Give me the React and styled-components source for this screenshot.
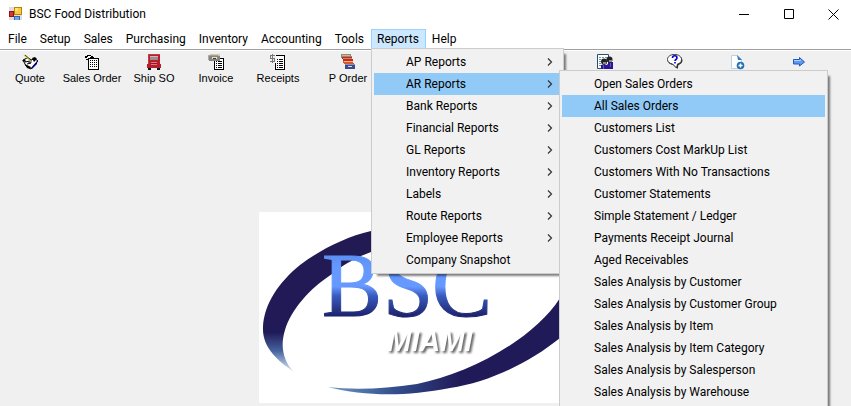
import React from 'react'
import styled, {createGlobalStyle} from 'styled-components'

const GlobalStyle=createGlobalStyle`
    html,body,#root{
        height:100%;
        margin:0;
    }
    *{
        box-sizing:border-box;
    }
    button{
        border:0;
        margin:0;
        padding:0;
        background:none;
        color:#000;
        font:inherit;
        text-align:left;
        white-space:nowrap;
    }
    svg{
        display:block;
    }
`
const Root=styled.div`
    display:flex;
    flex-direction:column;
    min-height:100%;
    height:100vh;
    overflow:hidden;
    background:#f0f0f0;
    color:#000;
    font-family:Roboto,"Open Sans",sans-serif;
    font-size:12px;
    line-height:16px;
`
const TitleBar=styled.header`
    display:flex;
    align-items:center;
    gap:6px;
    height:28px;
    flex:none;
    padding-left:8px;
    background:#fff;
`
const Title=styled.h1`
    flex-grow:1;
    margin:0;
    font-size:12px;
    font-weight:normal;
`
const WindowButtons=styled.div`
    display:flex;
    gap:10px;
`
const WindowButton=styled.button`
    display:flex;
    align-items:center;
    justify-content:center;
    width:35px;
    height:26px;
`
const MenuBar=styled.nav`
    display:flex;
    height:21px;
    flex:none;
    padding:1px 0 0 2px;
    background:#fff;
`
const MenuSlot=styled.div`
    position:relative;
`
const MenuButton=styled.button`
    height:20px;
    padding:0 6px 0 5px;
    border:1px solid ${props=>props.$open?'#99d1ff':'transparent'};
    background:${props=>props.$open?'#cce8ff':'transparent'};
`
const Menu=styled.ul`
    position:absolute;
    z-index:1;
    top:${props=>props.$sub?'-3px':'19px'};
    left:${props=>props.$sub?'185px':'0'};
    width:${props=>props.$sub?'269px':'193px'};
    min-height:${props=>props.$sub?'100vh':'0'};
    margin:0;
    padding:2px;
    border:1px solid #ccc;
    background:#f1f1f1;
    box-shadow:4px 4px 2px -2px rgba(0,0,0,0.5);
    list-style:none;
`
const MenuRow=styled.li`
    position:relative;
`
const MenuItem=styled.button`
    display:flex;
    align-items:center;
    justify-content:space-between;
    width:100%;
    height:22px;
    padding:0 8px 0 32px;
    background:${props=>props.$active?'#91c9f7':'transparent'};
`
const ToolBar=styled.div`
    display:flex;
    flex:none;
    height:38px;
    padding-top:4px;
    border-top:1px solid #a0a0a0;
    box-shadow:inset 0 1px #fff;
`
const ToolGroup=styled.div`
    display:flex;
    margin-left:${props=>props.$gap}px;
`
const ToolButton=styled.button`
    display:flex;
    flex-direction:column;
    align-items:center;
    width:62px;
    font-family:"Liberation Sans",Arial,sans-serif;
    font-size:11px;
    line-height:16px;
`
const Workspace=styled.main`
    display:flex;
    flex-grow:1;
    align-items:flex-end;
    justify-content:center;
    padding-bottom:3px;
`
const LogoPanel=styled.div`
    width:333px;
    height:191px;
    background:#fff;
`

const AppIcon=()=>(
    <svg width="15" height="14" viewBox="0 0 15 14" shapeRendering="crispEdges">
        <path d="M1 0h13v13H1z" fill="#ddd"/>
        <path d="M1 4h5v6H1z" fill="#8c1616"/>
        <path d="M2 5h3v4H2z" fill="#d33"/>
        <path d="M6 0h8v8H6z" fill="#b98600"/>
        <path d="M7 1h6v6H7z" fill="#ffc83c"/>
        <path d="M7 1h3v3H7z" fill="#ffe08a"/>
        <path d="M6 9h6v4H6z" fill="#3567b8"/>
        <path d="M7 10h4v3H7z" fill="#70a5f1"/>
    </svg>
)
const QuoteIcon=()=>(
    <svg width="16" height="16" viewBox="0 0 16 16">
        <path d="M1 6l4-2 5 2 2-2 4 3-7 8-5-3z" fill="#fff" stroke="#000"/>
        <path d="M0 7l3-2 1 3zM10 4l3-1 2 2-3 3zM3 10l2 4 3 1 1-2z" fill="#000"/>
        <path d="M9 14l6-7v3l-5 5z" fill="#000080"/>
        <path d="M3 8l5-1M5 10l4-1" stroke="#000" fill="none"/>
        <path d="M2 1l6 5" stroke="#d8d235" strokeWidth="1.500"/>
        <path d="M3 1l6 5v3l-3-1" fill="none" stroke="#000" strokeWidth=".7"/>
    </svg>
)
const SalesOrderIcon=()=>(
    <svg width="16" height="16" viewBox="0 0 16 16" shapeRendering="crispEdges">
        <path d="M4.500 4.500h10v11h-10z" fill="#fff" stroke="#000"/>
        <path d="M1 2h2V1h4v1h2v1h1v2H8V4H6V3H3v1H1z" fill="#000"/>
        <path d="M4 2h3v1H4z" fill="#fff"/>
        <path d="M6 6.500h7M6 8.500h7M6 10.500h7M6 12.500h7" stroke="#000" strokeDasharray="1 1"/>
        <path d="M2 5h2v1H2z" fill="#000"/>
    </svg>
)
const TruckIcon=()=>(
    <svg width="16" height="16" viewBox="0 0 16 16" shapeRendering="crispEdges">
        <path d="M2 0h12v10h1v4H1v-4h1z" fill="#b3202c"/>
        <path d="M2 0h12v1H2zM2 0h1v10H2z" fill="#c93b47"/>
        <path d="M4 2h8v4H4z" fill="#9c8c90"/>
        <path d="M4 2h8v1H4z" fill="#d2b6b6"/>
        <path d="M5 8h6v3H5z" fill="#db7780"/>
        <path d="M5 9h6v1H5z" fill="#8d1822"/>
        <path d="M2 14h3v2H2zM11 14h3v2h-3z" fill="#111"/>
    </svg>
)
const InvoiceIcon=()=>(
    <svg width="16" height="16" viewBox="0 0 16 16" shapeRendering="crispEdges">
        <path d="M6.500 4.500h9v11h-9z" fill="#fff" stroke="#000"/>
        <path d="M8 7.500h1M10 7.500h4M8 9.500h1M10 9.500h4M8 11.500h1M10 11.500h4M8 13.500h1M10 13.500h4" stroke="#000"/>
        <path d="M2 0h10v2H2z" fill="#c8c8c8"/>
        <path d="M0 1h2v5H0z" fill="#aaa"/>
        <path d="M1 2h11v5H1z" fill="#858585"/>
        <path d="M2 1h8v1H2z" fill="#b9a257"/>
        <path d="M4 3h5v2H4z" fill="#e9e3c4"/>
        <path d="M5 4h3v1H5z" fill="#333"/>
    </svg>
)
const ReceiptsIcon=()=>(
    <svg width="16" height="16" viewBox="0 0 16 16" shapeRendering="crispEdges">
        <path d="M5.500 1.500h9v14h-9z" fill="#fff" stroke="#000"/>
        <path d="M7 5.500h1M9 5.500h4M7 7.500h1M9 7.500h4M7 9.500h1M9 9.500h4M7 11.500h1M9 11.500h4M7 13.500h1M9 13.500h4" stroke="#000"/>
        <path d="M0 0h6v9H0z" fill="#f0f0f0"/>
        <path d="M5 1.500H.500v3h4v3H0M2.500 0v9" fill="none" stroke="#777"/>
    </svg>
)
const PurchaseIcon=()=>(
    <svg width="16" height="16" viewBox="0 0 16 16" shapeRendering="crispEdges">
        <path d="M1 0h10l1 4H1z" fill="#8b8b80"/>
        <path d="M2 1h8v1H2z" fill="#cdbd7c"/>
        <path d="M2 3h10l1 4H3z" fill="#bf2d21"/>
        <path d="M3 4h9v1H3z" fill="#f2745c"/>
        <path d="M3 7h10l1 3H4z" fill="#d35a2d"/>
        <path d="M4 7h9v1H4z" fill="#ffb183"/>
        <path d="M5 10h10v5H5z" fill="#3d4a86"/>
        <path d="M5 10h10v1H5z" fill="#8793c6"/>
        <path d="M8 12h4v1H8z" fill="#d8def6"/>
    </svg>
)
const CustomersIcon=()=>(
    <svg width="16" height="16" viewBox="0 0 16 16">
        <path d="M.5.5h11v14H.500z" fill="#fff" stroke="#24506e"/>
        <path d="M2 3.500h9M2 5.500h9M2 7.500h9M2 9.500h9M2 11.500h9" stroke="#6d91a8" strokeDasharray="2 1"/>
        <path d="M4 11l3-1 3 1 2-3h4v7H4z" fill="#2a1690"/>
        <circle cx="7" cy="7.500" r="3" fill="#222"/>
        <circle cx="12.500" cy="5.500" r="3" fill="#222"/>
        <path d="M6 8h3v2H6zM12 6h3v2h-3z" fill="#8a8a8a"/>
        <path d="M6 11h1v4H6zM13 9h1v4h-1z" fill="#6554bd"/>
    </svg>
)
const HelpIcon=()=>(
    <svg width="16" height="16" viewBox="0 0 16 16">
        <path d="M8 1.500c4 0 7.500 2 7.500 5 0 2-2 4-4 4.500l-1 4-4-4C3 10.500 1 9 1 6.500c0-3 3-5 7-5z" fill="#222"/>
        <path d="M7.500.5c4 0 7 2 7 5s-2 4-4 4.500l-1 4-4-4C2.500 9.500.5 8 .5 5.500c0-3 3-5 7-5z" fill="#fff" stroke="#333"/>
        <path d="M5.500 4c0-3 4.500-3 4.500 0 0 1.500-2 1.500-2 3M8 8v1.500" fill="none" stroke="#0000d0" strokeWidth="1.600"/>
    </svg>
)
const NewPageIcon=()=>(
    <svg width="16" height="16" viewBox="0 0 16 16">
        <path d="M2.500 1.500h6l4 4v9h-10z" fill="#fff" stroke="#b9d2e8"/>
        <path d="M8 1l5 5H9z" fill="#3c78b4"/>
        <circle cx="11.500" cy="11.500" r="3.800" fill="#2370b4"/>
        <path d="M11.500 9.500v4M9.500 11.500h4" stroke="#fff" strokeWidth="1.400"/>
    </svg>
)
const ArrowIcon=()=>(
    <svg width="16" height="16" viewBox="0 0 16 16">
        <path d="M2.500 5.500h6v-2L13.500 8l-5 4v-2h-6z" fill="#5d9bf2" stroke="#2457b5"/>
        <path d="M3 6.500h6.500v-1" stroke="#b2d2ff" fill="none"/>
    </svg>
)
const Chevron=()=>(
    <svg width="6" height="10" viewBox="0 0 6 10">
        <path d="M1 1.500L4.500 5 1 8.500" fill="none" stroke="#333" strokeWidth="1.200"/>
    </svg>
)
const Logo=()=>(
    <svg width="100%" height="100%" viewBox="0 0 333 191" role="img" aria-label="BSC Miami">
        <defs>
            <linearGradient id="left" x1="0" y1="19" x2="0" y2="160" gradientUnits="userSpaceOnUse">
                <stop offset="0" stopColor="#211a52"/>
                <stop offset=".72" stopColor="#211a58"/>
                <stop offset=".85" stopColor="#46639f"/>
                <stop offset="1" stopColor="#dcecf7"/>
            </linearGradient>
            <linearGradient id="right" x1="68" y1="0" x2="200" y2="0" gradientUnits="userSpaceOnUse">
                <stop offset="0" stopColor="#6f9cc4"/>
                <stop offset=".5" stopColor="#35508f"/>
                <stop offset="1" stopColor="#211a58"/>
            </linearGradient>
            <linearGradient id="letters" x1="0" y1="44" x2="0" y2="105" gradientUnits="userSpaceOnUse">
                <stop offset="0" stopColor="#5b90f5"/>
                <stop offset=".2" stopColor="#6699ff"/>
                <stop offset=".5" stopColor="#6699ff"/>
                <stop offset=".65" stopColor="#3a5cc0"/>
                <stop offset="1" stopColor="#1b1f68"/>
            </linearGradient>
        </defs>
        <path d="M35 160C19 149 3 136 4 115C5 92 20 70 41 53C61 38 86 25 112 19L150 12V30L112 40C96 46 84 53 73 62C50 77 32 98 26 118C21 134 24 149 35 160Z" fill="url(#left)"/>
        <path d="M69 175C95 178 125 177 158 172C210 162 275 127 301 86L325 60V100L301 126C270 151 230 170 191 176C145 185 105 184 69 175Z" fill="url(#right)"/>
        <text y="104" x="63 124 173" fontFamily="Liberation Serif" fontSize="90" fill="url(#letters)" stroke="url(#letters)">BSC</text>
        <g fontFamily="Liberation Sans" fontSize="29" fontStyle="italic" fontWeight="bold">
            <text x="128" y="139" fill="#fff" style={{filter:'drop-shadow(2px 2px 1px #666)'}}>MIAMI</text>
        </g>
    </svg>
)

const menus=['File','Setup','Sales','Purchasing','Inventory','Accounting','Tools','Reports','Help']
const reports=['AP Reports','AR Reports','Bank Reports','Financial Reports','GL Reports','Inventory Reports','Labels','Route Reports','Employee Reports','Company Snapshot']
const arReports=[
    'Open Sales Orders','All Sales Orders','Customers List','Customers Cost MarkUp List',
    'Customers With No Transactions','Customer Statements','Simple Statement / Ledger',
    'Payments Receipt Journal','Aged Receivables','Sales Analysis by Customer',
    'Sales Analysis by Customer Group','Sales Analysis by Item','Sales Analysis by Item Category',
    'Sales Analysis by Salesperson','Sales Analysis by Warehouse'
]
const tools=[
    {gap:-1,items:[['Quote',QuoteIcon],['Sales Order',SalesOrderIcon],['Ship SO',TruckIcon],['Invoice',InvoiceIcon],['Receipts',ReceiptsIcon]]},
    {gap:8,items:[['P Order',PurchaseIcon]]},
    {gap:195,items:[['',CustomersIcon]]},
    {gap:8,items:[['',HelpIcon],['',NewPageIcon],['',ArrowIcon]]}
]

const ArMenu=()=>(
    <Menu $sub>
        {arReports.map(name=>(
            <MenuRow key={name}><MenuItem $active={name==='All Sales Orders'}>{name}</MenuItem></MenuRow>
        ))}
    </Menu>
)
const ReportsMenu=()=>(
    <Menu>
        {reports.map(name=>(
            <MenuRow key={name}>
                <MenuItem $active={name==='AR Reports'}>
                    {name}
                    {name!=='Company Snapshot'&&<Chevron/>}
                </MenuItem>
                {name==='AR Reports'&&<ArMenu/>}
            </MenuRow>
        ))}
    </Menu>
)

class App extends React.Component{
    render(){
        return (
            <Root>
                <GlobalStyle/>
                <TitleBar>
                    <AppIcon/>
                    <Title>BSC Food Distribution</Title>
                    <WindowButtons>
                        <WindowButton>
                            <svg width="10" height="10"><path d="M0 5.500h10" stroke="#000"/></svg>
                        </WindowButton>
                        <WindowButton>
                            <svg width="10" height="10"><path d="M.5.5h9v9h-9z" fill="none" stroke="#000"/></svg>
                        </WindowButton>
                        <WindowButton>
                            <svg width="11" height="11"><path d="M.5.5l10 10M10.500.5l-10 10" stroke="#000"/></svg>
                        </WindowButton>
                    </WindowButtons>
                </TitleBar>
                <MenuBar>
                    {menus.map(name=>(
                        <MenuSlot key={name}>
                            <MenuButton $open={name==='Reports'}>{name}</MenuButton>
                            {name==='Reports'&&<ReportsMenu/>}
                        </MenuSlot>
                    ))}
                </MenuBar>
                <ToolBar>
                    {tools.map((group,i)=>(
                        <ToolGroup key={i} $gap={group.gap}>
                            {group.items.map(([name,Icon],n)=>(
                                <ToolButton key={n}><Icon/>{name}</ToolButton>
                            ))}
                        </ToolGroup>
                    ))}
                </ToolBar>
                <Workspace>
                    <LogoPanel><Logo/></LogoPanel>
                </Workspace>
            </Root>
        )
    }
}
export default App
